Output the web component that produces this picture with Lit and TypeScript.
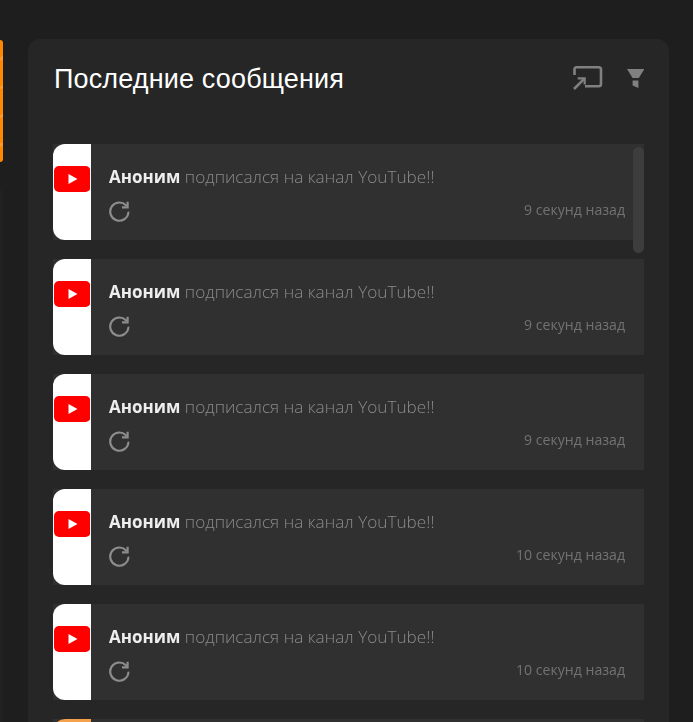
import { LitElement, html, css } from "lit";
import { customElement } from "lit/decorators.js";

const rows = [
  "9 секунд назад",
  "9 секунд назад",
  "9 секунд назад",
  "10 секунд назад",
  "10 секунд назад",
];

const yt = html`<svg class="yt" viewBox="0 0 36.5 26" width="36.5" height="26">
  <rect x="0" y="0" width="36.5" height="26" rx="5" fill="#ff0000"></rect>
  <path d="M14.5 8 L23.5 13 L14.5 18 Z" fill="#fff"></path>
</svg>`;

const refresh = html`<svg class="refresh" viewBox="0 0 21 22" width="21" height="22" fill="none">
  <path d="M16.9 4.3 A9.1 9.1 0 1 0 19.4 11.5" stroke="#8c8c8c" stroke-width="2.2" stroke-linecap="round"></path>
  <path d="M18.6 0.8 V6.4 H13" stroke="#8c8c8c" stroke-width="2.2"></path>
</svg>`;

@customElement("app-root")
export class AppRoot extends LitElement {
  static styles = css`
    :host {
      display: grid;
      grid-template-columns: 3px 641px;
      column-gap: 25px;
      height: 722px;
      overflow: hidden;
      background: #1e1e1e;
      font-family: "Open Sans", "Liberation Sans", sans-serif;
      align-items: start;
    }
    .side {
      display: flex;
      flex-direction: column;
      gap: 28px;
      padding-top: 40px;
    }
    .orange {
      height: 122px;
      background: repeating-linear-gradient(155deg, #ff8800 0 16px, #ff9a2a 16px 19px, #ff8800 19px 26px);
      border-radius: 0 5px 5px 0;
    }
    .darkcard {
      height: 600px;
      background: #222;
      border-radius: 0 5px 0 0;
    }
    .main {
      margin-top: 39px;
      background: #262626;
      border-radius: 12px 12px 0 0;
      padding: 0 25px;
      height: 683px;
      box-sizing: border-box;
      position: relative;
    }
    .head {
      height: 105px;
      display: flex;
      align-items: flex-start;
      justify-content: space-between;
    }
    h1 {
      margin: 23px 0 0 1px;
      font: 400 27px/34px "Liberation Sans", Arial, sans-serif;
      letter-spacing: 0.15px;
      color: #fff;
    }
    .tools {
      display: flex;
      gap: 24px;
      padding-top: 26px;
    }
    .cast {
      display: block;
      margin-top: 1px;
    }
    .filter {
      display: block;
      margin-top: 4px;
    }
    .list {
      display: flex;
      flex-direction: column;
      gap: 19px;
    }
    .row {
      display: flex;
      height: 96px;
      background: #303030;
      flex: none;
    }
    .logo {
      width: 38px;
      flex: none;
      background: #fff;
      border-radius: 12px 0 0 12px;
      padding: 22px 0 0 0.5px;
      box-sizing: border-box;
    }
    .logo.o {
      background: #f5a04a;
    }
    .yt {
      display: block;
    }
    .body {
      flex: 1;
      padding: 22px 19px 0 18px;
      min-width: 0;
    }
    .msg {
      font-size: 17.2px;
      font-weight: 300;
      line-height: 22px;
      color: #8a8a8a;
      white-space: nowrap;
      will-change: opacity;
    }
    .msg b {
      font-size: 17px;
      font-weight: 700;
      color: #eeeeee;
    }
    .meta {
      display: flex;
      justify-content: space-between;
      align-items: center;
      margin-top: 13px;
    }
    .refresh {
      display: block;
    }
    .time {
      font-size: 14.1px;
      line-height: 20px;
      color: #727272;
      margin-top: -4px;
      will-change: opacity;
    }
    .thumb {
      position: absolute;
      left: 605px;
      top: 108px;
      width: 11px;
      height: 106px;
      border-radius: 6px;
      background: #3d3d3d;
    }
  `;

  render() {
    return html`
      <div class="side">
        <div class="orange"></div>
        <div class="darkcard"></div>
      </div>
      <div class="main">
        <div class="head">
          <h1>Последние сообщения</h1>
          <div class="tools">
            <svg class="cast" width="30" height="24" viewBox="0 0 30 24" fill="none">
              <path d="M1.5 9 V3.5 Q1.5 1.3 3.7 1.3 H25.8 Q28 1.3 28 3.5 V18 Q28 20.2 25.8 20.2 H12" stroke="#808080" stroke-width="2.6"></path>
              <path d="M1 23 L11.2 12.8" stroke="#808080" stroke-width="2.6"></path>
              <path d="M4.7 12.3 H11.7 V18.5" stroke="#808080" stroke-width="2.2"></path>
            </svg>
            <svg class="filter" width="17" height="19" viewBox="0 0 17 19">
              <path d="M0 0 H17.5 L11.8 9 H5.6 Z" fill="#808080"></path>
              <path d="M5.6 11.4 H11.4 V19 L5.6 16.5 Z" fill="#808080"></path>
            </svg>
          </div>
        </div>
        <div class="list">
          ${rows.map(
            (t) => html`<div class="row">
              <div class="logo">${yt}</div>
              <div class="body">
                <div class="msg"><b>Аноним</b> подписался на канал YouTube!!</div>
                <div class="meta">${refresh}<span class="time">${t}</span></div>
              </div>
            </div>`
          )}
          <div class="row"><div class="logo o"></div></div>
        </div>
        <div class="thumb"></div>
      </div>
    `;
  }
}
